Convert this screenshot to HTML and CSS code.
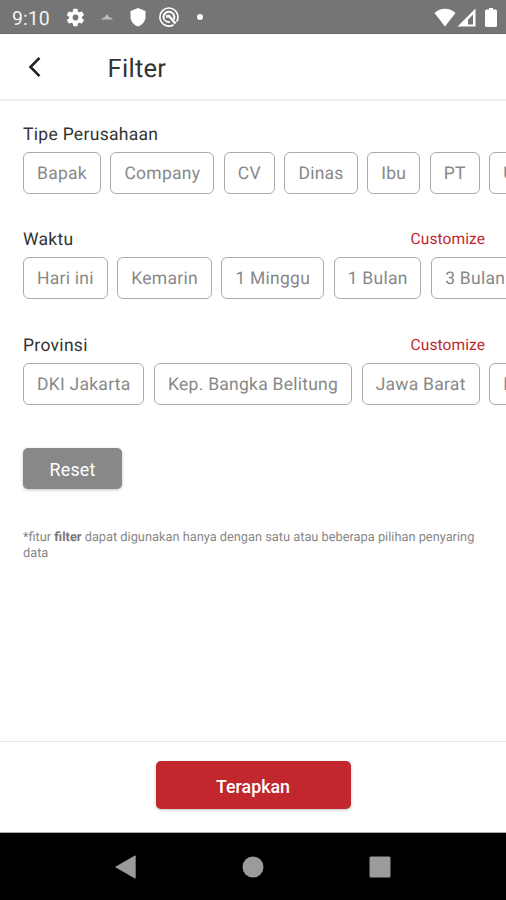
FILE: index.html
```html
<!DOCTYPE html>
<html lang="id">
<head>
    <meta charset="UTF-8">
    <meta name="viewport" content="width=device-width, initial-scale=1.0">
    <title>Filter</title>
    <link rel="stylesheet" href="styles.css">
</head>
<body>
    <div class="status-bar">
        <span class="clock">9:10</span>
        <svg class="gear" width="21" height="21" viewBox="0 0 24 24"><path fill="#fff" fill-rule="evenodd" d="M19.4 13a7.500 7.500 0 0 0 0-2l2.100-1.600c.2-.2.200-.4.100-.6l-2-3.500c-.1-.2-.4-.3-.6-.2l-2.500 1a7 7 0 0 0-1.700-1l-.4-2.600a.5.500 0 0 0-.5-.5h-4a.5.500 0 0 0-.5.500L9 5.100a7 7 0 0 0-1.700 1l-2.500-1c-.2-.1-.5 0-.6.200l-2 3.500c-.1.200-.1.400.1.600L4.500 11a7.500 7.500 0 0 0 0 2l-2.200 1.600c-.2.200-.2.400-.1.600l2 3.500c.1.200.4.300.6.200l2.500-1a7 7 0 0 0 1.700 1l.4 2.600c0 .3.200.5.500.5h4c.3 0 .5-.2.500-.5l.4-2.600a7 7 0 0 0 1.700-1l2.500 1c.2.100.5 0 .6-.2l2-3.500c.1-.2.100-.4-.1-.6zM12 15.300a3.300 3.300 0 1 1 0-6.600 3.300 3.300 0 0 1 0 6.600z"/></svg>
        <svg class="caret" width="12" height="6" viewBox="0 0 12 6"><path fill="#bdbdbd" d="M0 5.500c1-1.500 2.500-2 4-2.500L6 0l2 3c1.500.5 3 1 4 2.500z"/></svg>
        <svg class="shield" width="16" height="19" viewBox="0 0 16 19"><path fill="#fff" d="M8 0l7.500 3v5.500c0 4.500-3 8.500-7.500 10-4.500-1.500-7.500-5.500-7.500-10V3z"/></svg>
        <svg class="radar" width="20" height="20" viewBox="0 0 20 20">
            <g fill="none" stroke="#fff">
                <path stroke-width="1.600" d="M17.600 14.700A9 9 0 1 0 14.600 17.700"/>
                <path stroke-width="2" d="M5.200 12.800A5.400 5.400 0 1 1 14.800 12.300"/>
                <path stroke-width="1.600" d="M5.500 13.200Q8 15.500 11 15"/>
                <path stroke-width="2.400" d="M7 9.500l3-.5 6.500 7.500"/>
            </g>
        </svg>
        <span class="dot"></span>
        <div class="signals">
            <svg width="22" height="19" viewBox="0 0 22 19"><path fill="#fff" d="M.5 5C6.500-.7 15.500-.7 21.500 5L11 18.500z"/></svg>
            <svg width="19" height="19" viewBox="0 0 19 19"><path fill="#fff" fill-rule="evenodd" d="M18.500.5v18H.5zM16 6.500L11 11.700v4.800h5z"/></svg>
            <svg class="battery" width="12" height="19" viewBox="0 0 12 19"><path fill="#fff" d="M4 0h4v1.500h2.500q1.500 0 1.500 1.500v14.500q0 1.500-1.500 1.500h-9Q0 19 0 17.500V3Q0 1.500 1.500 1.500H4z"/></svg>
        </div>
    </div>

    <header class="app-bar">
        <svg width="14" height="22" viewBox="0 0 14 22"><path fill="none" stroke="#222" stroke-width="2.600" d="M12.500 1.800L3.500 11l9 9.200"/></svg>
        <h1>Filter</h1>
    </header>

    <main>
        <section>
            <div class="section-head">
                <h2>Tipe Perusahaan</h2>
            </div>
            <ul class="chips">
                <li>Bapak</li>
                <li>Company</li>
                <li>CV</li>
                <li>Dinas</li>
                <li>Ibu</li>
                <li>PT</li>
                <li>UD</li>
            </ul>
        </section>
        <section>
            <div class="section-head">
                <h2>Waktu</h2>
                <a class="customize">Customize</a>
            </div>
            <ul class="chips">
                <li>Hari ini</li>
                <li>Kemarin</li>
                <li>1 Minggu</li>
                <li>1 Bulan</li>
                <li>3 Bulan</li>
            </ul>
        </section>
        <section>
            <div class="section-head">
                <h2>Provinsi</h2>
                <a class="customize">Customize</a>
            </div>
            <ul class="chips">
                <li>DKI Jakarta</li>
                <li>Kep. Bangka Belitung</li>
                <li>Jawa Barat</li>
                <li>Lampung</li>
            </ul>
        </section>
        <button class="reset">Reset</button>
        <p class="note">*fitur <b>filter</b> dapat digunakan hanya dengan satu atau beberapa pilihan penyaring data</p>
    </main>

    <footer class="action-bar">
        <button class="apply">Terapkan</button>
    </footer>

    <div class="nav-bar">
        <svg width="22" height="24" viewBox="0 0 22 24"><path fill="#9b9b9b" d="M19.500.8q1.200-.6 1.200.8v20.800q0 1.400-1.200.8L.8 12.600q-.8-.6 0-1.200z"/></svg>
        <svg width="22" height="22" viewBox="0 0 22 22"><circle cx="11" cy="11" r="10.500" fill="#9b9b9b"/></svg>
        <svg width="22" height="22" viewBox="0 0 22 22"><rect x=".5" y=".5" width="21" height="21" rx="1.500" fill="#9b9b9b"/></svg>
    </div>
</body>
</html>
```
FILE: styles.css
```css
body {
    margin: 0;
    height: 900px;
    display: flex;
    flex-direction: column;
    overflow: hidden;
    background-color: #fff;
    font-family: Roboto, sans-serif;
    text-rendering: geometricPrecision;
    color: #333;
}
svg {
    display: block;
    flex-shrink: 0;
}
h1, h2, p, ul {
    margin: 0;
    padding: 0;
    font-weight: 400;
}
.status-bar {
    height: 34px;
    box-sizing: border-box;
    padding: 1px 9px 0 12px;
    display: flex;
    align-items: center;
    background-color: #757575;
    border-bottom: 1px solid #686868;
}
.clock {
    width: 53px;
    padding-top: 2px;
    font-size: 19.5px;
    color: #f2f2f2;
}
.caret {
    margin-left: 15px;
}
.shield {
    margin-left: 17px;
}
.radar {
    margin-left: 13px;
}
.dot {
    width: 6px;
    height: 6px;
    margin-left: 18px;
    border-radius: 50%;
    background-color: #fff;
}
.signals {
    margin-left: auto;
    display: flex;
    gap: 1px;
}
.battery {
    margin-left: 8px;
}
.app-bar {
    height: 67px;
    box-sizing: border-box;
    padding: 1px 0 0 27px;
    display: flex;
    align-items: center;
    border-bottom: 2px solid #f0f0f0;
}
.app-bar h1 {
    margin-left: 66.5px;
    padding-top: 3px;
    font-size: 25.5px;
    letter-spacing: 0.3px;
}
main {
    flex: 1;
    padding: 22px 0 0 23px;
}
section {
    height: 105.3px;
}
.section-head {
    height: 29px;
    padding-right: 21px;
    display: flex;
    justify-content: space-between;
}
.section-head h2 {
    font-size: 17.5px;
    line-height: 24px;
    letter-spacing: 0.3px;
}
.customize {
    font-size: 15.5px;
    line-height: 22px;
    letter-spacing: 0.1px;
    color: #c1272d;
}
.chips {
    display: flex;
    gap: 9.7px;
    overflow: hidden;
    list-style: none;
}
.chips li {
    height: 42px;
    box-sizing: border-box;
    padding: 0 12.9px 0 13px;
    border: 1px solid #aaa;
    border-radius: 6px;
    font-size: 17.5px;
    line-height: 42px;
    letter-spacing: 0.25px;
    white-space: nowrap;
    color: #888;
}
button {
    display: block;
    padding: 2px 0 0;
    border: none;
    font-family: inherit;
    font-size: 17.8px;
    color: #fff;
    box-shadow: 0 1px 3px rgba(0, 0, 0, 0.25);
}
.reset {
    width: 99px;
    height: 41px;
    margin-top: 9px;
    border-radius: 5px;
    background-color: #888;
    letter-spacing: 0.2px;
}
.note {
    width: 460px;
    margin-top: 41px;
    font-size: 12.8px;
    line-height: 16px;
    color: #888;
}
.note b {
    font-weight: 700;
    color: #777;
}
.action-bar {
    height: 92px;
    box-sizing: border-box;
    padding-top: 19px;
    display: flex;
    justify-content: center;
    align-items: flex-start;
    border-top: 1px solid #e6e6e6;
    border-bottom: 1px solid #aaa;
}
.apply {
    width: 195px;
    height: 48px;
    border-radius: 5px;
    background-color: #c1272d;
    font-weight: 500;
}
.nav-bar {
    height: 67px;
    padding: 0 115px;
    display: flex;
    justify-content: space-between;
    align-items: center;
    background-color: #000;
}
```
